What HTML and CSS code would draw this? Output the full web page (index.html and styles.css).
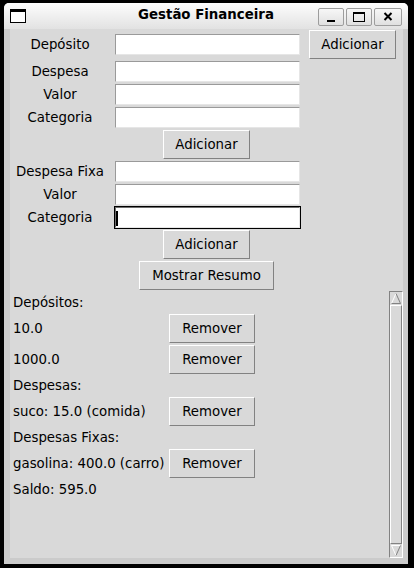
FILE: index.html
```html
<!DOCTYPE html>
<html lang="pt">
<head>
<meta charset="utf-8">
<title>Gestão Financeira</title>
<link rel="stylesheet" href="styles.css">
</head>
<body>
<div class="window">
  <div class="titlebar">
    <div class="tb-left">
      <svg class="app-icon" width="16" height="14" viewBox="0 0 16 14"><rect x="0.5" y="0.5" width="15" height="13" fill="#fff" stroke="#000"/><rect x="0" y="0" width="16" height="3" fill="#000"/></svg>
    </div>
    <div class="title">Gestão Financeira</div>
    <div class="tb-buttons">
      <div class="tb-btn"><svg width="24" height="16" viewBox="0 0 24 16"><rect x="8" y="11" width="8" height="2" fill="#000"/></svg></div>
      <div class="tb-btn"><svg width="24" height="16" viewBox="0 0 24 16"><rect x="6.5" y="3.5" width="11" height="9" fill="none" stroke="#000"/><rect x="6" y="3" width="12" height="2" fill="#000"/></svg></div>
      <div class="tb-btn tb-close"><svg width="26" height="16" viewBox="0 0 26 16"><path d="M9.5 4 L16.5 11 M16.5 4 L9.5 11" stroke="#000" stroke-width="2" fill="none"/></svg></div>
    </div>
  </div>
  <div class="content">
    <div class="form">
      <div class="lbl">Depósito</div>
      <div class="entry"></div>
      <div class="btn btn-side">Adicionar</div>

      <div class="lbl">Despesa</div>
      <div class="entry"></div>
      <div class="lbl">Valor</div>
      <div class="entry"></div>
      <div class="lbl">Categoria</div>
      <div class="entry"></div>
      <div class="span"><div class="btn btn-add">Adicionar</div></div>

      <div class="lbl">Despesa Fixa</div>
      <div class="entry"></div>
      <div class="lbl">Valor</div>
      <div class="entry"></div>
      <div class="lbl">Categoria</div>
      <div class="entry entry-focus"><span class="cursor"></span></div>
      <div class="span"><div class="btn btn-add">Adicionar</div></div>
      <div class="span"><div class="btn btn-resumo">Mostrar Resumo</div></div>
    </div>

    <div class="lower">
      <div class="list">
        <div class="head">Depósitos:</div>
        <div class="val">10.0</div><div class="btn btn-remove">Remover</div>
        <div class="val">1000.0</div><div class="btn btn-remove">Remover</div>
        <div class="head">Despesas:</div>
        <div class="val">suco: 15.0 (comida)</div><div class="btn btn-remove">Remover</div>
        <div class="head">Despesas Fixas:</div>
        <div class="val">gasolina: 400.0 (carro)</div><div class="btn btn-remove">Remover</div>
        <div class="head">Saldo: 595.0</div>
      </div>
      <div class="scrollbar">
        <svg class="sb-arrow" width="12" height="13" viewBox="0 0 12 13"><polygon points="6,1.5 1.5,11.5 10.5,11.5" fill="#d9d9d9"/><path d="M1.5 11.5 L6 1.5" stroke="#fff" fill="none"/><path d="M6 1.5 L10.5 11.5 L1.5 11.5" stroke="#828282" fill="none"/></svg>
        <div class="sb-slider"></div>
        <svg class="sb-arrow" width="12" height="13" viewBox="0 0 12 13"><polygon points="1.5,1.5 10.5,1.5 6,11.5" fill="#d9d9d9"/><path d="M1.5 1.5 L10.5 1.5 M1.5 1.5 L6 11.5" stroke="#fff" fill="none"/><path d="M10.5 1.5 L6 11.5" stroke="#828282" fill="none"/></svg>
      </div>
    </div>
  </div>
</div>
</body>
</html>
```

FILE: styles.css
```css
* { box-sizing: border-box; }

html, body {
  margin: 0;
  padding: 0;
  background: #000;
}

body {
  width: 414px;
  height: 568px;
  overflow: hidden;
  font-family: "DejaVu Sans", "Noto Sans", sans-serif;
  font-size: 13.33px;
  line-height: 15px;
  color: #000;
}

.window {
  margin: 3px 0 0 4px;
  width: 404px;
  height: 561px;
  background: #cbcbcb;
  border-radius: 5px 5px 0 0;
  display: flex;
  flex-direction: column;
  overflow: hidden;
}

/* ---------- title bar ---------- */
.titlebar {
  flex: none;
  height: 26px;
  display: grid;
  grid-template-columns: 1fr auto 1fr;
  background: linear-gradient(#fdfdfd, #e2e2e2);
}

.tb-left { padding: 6px 0 0 6px; }
.app-icon { display: block; }

.title {
  font-weight: bold;
  margin-top: 4px;
  white-space: nowrap;
}

.tb-buttons {
  display: flex;
  justify-content: flex-end;
  gap: 2px;
  padding: 5px 6px 0 0;
}

.tb-btn {
  width: 26px;
  height: 18px;
  border: 1px solid #9d9d9d;
  border-radius: 2px;
  background: linear-gradient(#f7f7f7, #e0e0e0);
  display: flex;
  align-items: center;
  justify-content: center;
}
.tb-btn svg { display: block; }
.tb-close { width: 28px; }

/* ---------- content ---------- */
.content {
  flex: 1;
  margin: 0 5px 6px 6px;
  background: #d9d9d9;
  display: flex;
  flex-direction: column;
  min-height: 0;
}

.form {
  display: grid;
  grid-template-columns: 100px 190px 103px;
  align-items: center;
}

.lbl {
  grid-column: 1;
  text-align: center;
  white-space: nowrap;
}

.entry {
  position: relative;
  width: 185px;
  height: 21px;
  margin: 1px 0 1px 5px;
  background: #fff;
  border: 1px solid;
  border-color: #9a9a9a #e6e6e6 #e6e6e6 #9a9a9a;
}

.entry-focus {
  box-shadow: 0 0 0 1px #000;
  border-color: #6e6e6e #e6e6e6 #e6e6e6 #6e6e6e;
}

.cursor {
  position: absolute;
  left: 0;
  top: 3px;
  width: 2px;
  height: 15px;
  background: #000;
}

.btn {
  height: 29px;
  margin: 1px 0;
  background: #d9d9d9;
  border: 1px solid;
  border-color: #ffffff #828282 #828282 #ffffff;
  display: flex;
  align-items: center;
  justify-content: center;
  white-space: nowrap;
}

.btn-side {
  width: 87px;
  margin-left: 9px;
  justify-self: start;
}

.span {
  grid-column: 1 / -1;
  display: flex;
  justify-content: center;
}

.btn-add { width: 87px; }
.btn-resumo { width: 135px; }

/* ---------- lower list area ---------- */
.lower {
  flex: 1;
  display: flex;
  min-height: 0;
}

.list {
  flex: 1;
  padding: 1px 0 0 3px;
  display: grid;
  grid-template-columns: 156px auto;
  grid-auto-rows: min-content;
  align-content: start;
  align-items: center;
}

.head {
  grid-column: 1 / -1;
  height: 21px;
  line-height: 21px;
  white-space: nowrap;
}

.val { white-space: nowrap; }

.btn-remove {
  width: 86px;
  justify-self: start;
}

.scrollbar {
  flex: none;
  width: 14px;
  border: 1px solid;
  border-color: #828282 #ffffff #ffffff #828282;
  display: flex;
  flex-direction: column;
  background: #c3c3c3;
}

.sb-arrow {
  display: block;
  flex: none;
  background: #d9d9d9;
}

.sb-slider {
  flex: 1;
  background: #d9d9d9;
  border: 1px solid;
  border-color: #ffffff #828282 #828282 #ffffff;
}
```
